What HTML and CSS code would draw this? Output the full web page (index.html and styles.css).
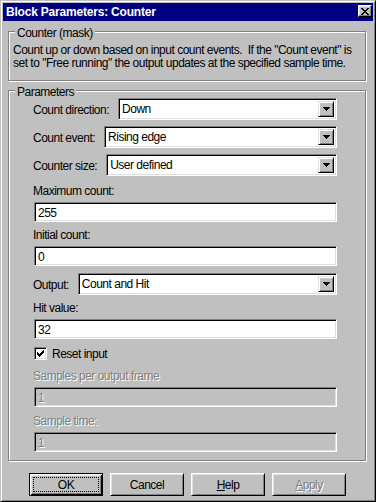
FILE: index.html
```html
<!DOCTYPE html>
<html lang="en">
<head>
    <meta charset="UTF-8">
    <title>Block Parameters: Counter</title>
    <link rel="stylesheet" href="styles.css">
</head>
<body>
<div class="window">
    <div class="titlebar">
        <span class="title">Block Parameters: Counter</span>
        <span class="close-btn">
            <svg width="8" height="7" viewBox="0 0 8 7" shape-rendering="crispEdges"><path d="M0 0h2v1h-2z M6 0h2v1h-2z M1 1h2v1h-2z M5 1h2v1h-2z M2 2h4v1h-4z M3 3h2v1h-2z M2 4h4v1h-4z M1 5h2v1h-2z M5 5h2v1h-2z M0 6h2v1h-2z M6 6h2v1h-2z" fill="#000"/></svg>
        </span>
    </div>

    <div class="dialog">
        <!-- mask description -->
        <div class="group group-mask">
            <div class="legend">Counter (mask)</div>
            <p class="desc">Count up or down based on input count events.&nbsp; If the "Count event" is<br>set to "Free running" the output updates at the specified sample time.</p>
        </div>

        <!-- parameters -->
        <div class="group">
            <div class="legend">Parameters</div>
            <div class="fields">
                <div class="row">
                    <span class="label">Count direction:</span>
                    <div class="combo"><span class="combo-value">Down</span><span class="combo-btn"><svg width="7" height="4" viewBox="0 0 7 4" shape-rendering="crispEdges"><path d="M0 0h7v1h-7z M1 1h5v1h-5z M2 2h3v1h-3z M3 3h1v1h-1z" fill="#000"/></svg></span></div>
                </div>
                <div class="row row-gap">
                    <span class="label">Count event:</span>
                    <div class="combo"><span class="combo-value">Rising edge</span><span class="combo-btn"><svg width="7" height="4" viewBox="0 0 7 4" shape-rendering="crispEdges"><path d="M0 0h7v1h-7z M1 1h5v1h-5z M2 2h3v1h-3z M3 3h1v1h-1z" fill="#000"/></svg></span></div>
                </div>
                <div class="row row-gap">
                    <span class="label">Counter size:</span>
                    <div class="combo"><span class="combo-value">User defined</span><span class="combo-btn"><svg width="7" height="4" viewBox="0 0 7 4" shape-rendering="crispEdges"><path d="M0 0h7v1h-7z M1 1h5v1h-5z M2 2h3v1h-3z M3 3h1v1h-1z" fill="#000"/></svg></span></div>
                </div>

                <div class="field-label first-label">Maximum count:</div>
                <div class="edit">255</div>

                <div class="field-label">Initial count:</div>
                <div class="edit">0</div>

                <div class="row row-after-edit">
                    <span class="label">Output:</span>
                    <div class="combo"><span class="combo-value">Count and Hit</span><span class="combo-btn"><svg width="7" height="4" viewBox="0 0 7 4" shape-rendering="crispEdges"><path d="M0 0h7v1h-7z M1 1h5v1h-5z M2 2h3v1h-3z M3 3h1v1h-1z" fill="#000"/></svg></span></div>
                </div>

                <div class="field-label">Hit value:</div>
                <div class="edit">32</div>

                <div class="check-row">
                    <span class="checkbox"><svg width="7" height="7" viewBox="0 0 7 7" shape-rendering="crispEdges"><path d="M0 2h1v3h-1z M1 3h1v3h-1z M2 4h1v3h-1z M3 3h1v3h-1z M4 2h1v3h-1z M5 1h1v3h-1z M6 0h1v3h-1z" fill="#000"/></svg></span>
                    <span>Reset input</span>
                </div>

                <div class="field-label disabled label-after-check">Samples per output frame</div>
                <div class="edit edit-disabled"><span class="disabled">1</span></div>

                <div class="field-label disabled label-last">Sample time:</div>
                <div class="edit edit-disabled"><span class="disabled">1</span></div>
            </div>
        </div>

        <div class="buttons">
            <button class="btn btn-default"><span class="focus">OK</span></button>
            <button class="btn">Cancel</button>
            <button class="btn"><u>H</u>elp</button>
            <button class="btn"><span class="disabled"><u>A</u>pply</span></button>
        </div>
    </div>
</div>
</body>
</html>
```

FILE: styles.css
```css
* {
    box-sizing: border-box;
}
body {
    margin: 0;
    background: #c0c0c0;
    font-family: 'Liberation Sans', Arial, sans-serif;
    font-size: 12px;
    letter-spacing: -0.5px;
    color: #000;
}
.window {
    width: 376px;
    height: 502px;
    display: flex;
    flex-direction: column;
    padding: 2px;
    background: #c0c0c0;
    border: 1px solid;
    border-color: #c0c0c0 #000 #000 #c0c0c0;
    box-shadow: inset 1px 1px #fff, inset -1px -1px #808080;
}
.titlebar {
    height: 18px;
    display: flex;
    align-items: flex-start;
    padding-left: 3px;
    background: #000080;
    color: #fff;
}
.title {
    font-weight: bold;
    line-height: 18px;
    letter-spacing: -0.2px;
}
.close-btn {
    width: 14px;
    height: 12px;
    margin: 2px 1px 0 auto;
    display: flex;
    align-items: center;
    justify-content: center;
    background: #c0c0c0;
    border: 1px solid;
    border-color: #fff #000 #000 #fff;
    box-shadow: inset -1px -1px #808080, inset 1px 1px #dfdfdf;
}
.dialog {
    flex: 1;
    padding: 10px 7px 0 5px;
}
.group {
    border: 1px solid #808080;
    box-shadow: inset 1px 1px #fff, 1px 1px #fff;
    padding: 0 4px;
}
.group + .group {
    margin-top: 9px;
}
.legend {
    display: table;
    margin: -5px 0 0 2px;
    padding: 0 2px;
    line-height: 12px;
    background: #c0c0c0;
}
.desc {
    margin: 5px 0 0;
    padding-bottom: 10px;
    line-height: 13px;
}
.fields {
    padding: 0 24px 8px 20px;
}
.row {
    display: flex;
    align-items: center;
    gap: 9px;
    height: 22px;
}
.row-gap {
    margin-top: 6px;
}
.row-after-edit {
    margin-top: 7px;
}
.label {
    line-height: 12px;
    white-space: nowrap;
    padding-top: 1px;
}
.combo {
    flex: 1;
    height: 22px;
    display: flex;
    padding: 2px;
    background: #fff;
    border: 1px solid;
    border-color: #808080 #fff #fff #808080;
    box-shadow: inset 1px 1px #000, inset -1px -1px #dfdfdf;
}
.combo-value {
    flex: 1;
    padding-left: 1px;
    line-height: 17px;
}
.combo-btn {
    width: 16px;
    display: flex;
    align-items: center;
    justify-content: center;
    background: #c0c0c0;
    border: 1px solid;
    border-color: #dfdfdf #000 #000 #dfdfdf;
    box-shadow: inset 1px 1px #fff, inset -1px -1px #808080;
}
.field-label {
    margin-top: 7px;
    line-height: 12px;
}
.first-label {
    margin-top: 9px;
}
.label-after-check {
    margin-top: 10px;
}
.label-last {
    margin-top: 8px;
}
.edit {
    height: 20px;
    margin: 5px 0 0 1px;
    padding: 2px 3px;
    line-height: 16px;
    background: #fff;
    border: 1px solid;
    border-color: #808080 #fff #fff #808080;
    box-shadow: inset 1px 1px #000, inset -1px -1px #dfdfdf;
}
.edit-disabled {
    background: #c0c0c0;
}
.disabled {
    color: #808080;
    text-shadow: 1px 1px 0 #fff;
}
.check-row {
    display: flex;
    align-items: center;
    gap: 5px;
    height: 13px;
    margin: 8px 0 0 1px;
}
.checkbox {
    width: 13px;
    height: 13px;
    display: flex;
    align-items: center;
    justify-content: center;
    background: #fff;
    border: 1px solid;
    border-color: #808080 #fff #fff #808080;
    box-shadow: inset 1px 1px #000, inset -1px -1px #dfdfdf;
}
.buttons {
    display: flex;
    gap: 7px;
    margin-top: 12px;
    padding-left: 21px;
}
.btn {
    width: 74px;
    height: 23px;
    padding: 0;
    font: inherit;
    letter-spacing: inherit;
    color: #000;
    background: #c0c0c0;
    border: 1px solid;
    border-color: #fff #000 #000 #fff;
    box-shadow: inset 1px 1px #dfdfdf, inset -1px -1px #808080;
}
.btn-default {
    padding: 3px;
    border-color: #000;
    box-shadow: inset 1px 1px #fff, inset -1px -1px #000, inset 2px 2px #dfdfdf, inset -2px -2px #808080;
}
.focus {
    display: flex;
    height: 100%;
    align-items: center;
    justify-content: center;
    border: 1px dotted #000;
}
```
